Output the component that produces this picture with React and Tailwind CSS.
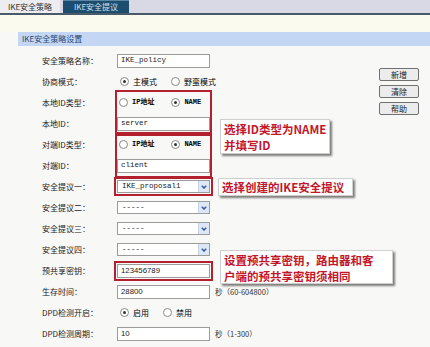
import React from "react";

const cjk = "font-['Noto_Sans_CJK_SC',sans-serif]";
const mono = "font-['Liberation_Mono','Noto_Sans_CJK_SC',monospace]";
const sans = "font-['Liberation_Sans','Noto_Sans_CJK_SC',sans-serif]";

function TextBox({ value, font = mono, className = "" }) {
  return (
    <div
      className={`h-[14px] w-[93px] shrink-0 border border-[#9c9c9c] bg-white flex items-center px-[3px] text-[7.5px] text-[#222] ${font} ${className}`}
    >
      {value}
    </div>
  );
}

function Radio({ checked, label, small }) {
  return (
    <span className="flex items-center gap-[4px] shrink-0 whitespace-nowrap">
      <span className="w-[9px] h-[9px] shrink-0 rounded-full border border-[#8a8a8a] bg-white flex items-center justify-center">
        {checked && <span className="w-[3px] h-[3px] rounded-full bg-[#333]" />}
      </span>
      <span className={small ? `text-[7px] font-bold ${mono}` : "text-[8px]"}>{label}</span>
    </span>
  );
}

function Select({ value }) {
  return (
    <div className="h-[13px] w-[93px] border border-[#9c9c9c] bg-white flex items-center">
      <span className={`flex-1 pl-[4px] text-[7.5px] text-[#222] ${mono}`}>{value}</span>
      <span className="w-[11px] h-full bg-[#dde7f6] border-l border-[#c7d3e8] flex items-center justify-center">
        <svg width="6" height="4" viewBox="0 0 6 4">
          <path d="M0.8 0.8 L3 3 L5.2 0.8" fill="none" stroke="#3658a6" strokeWidth="1.5" />
        </svg>
      </span>
    </div>
  );
}

function Row({ label, children }) {
  return (
    <div className="h-[21px] flex items-center">
      <div className="w-[117px] shrink-0 pl-[42px] text-[8px] text-[#222] whitespace-nowrap">{label}</div>
      <div className="w-[93px] flex items-center">{children}</div>
    </div>
  );
}

// 两行共用一个红框
function BoxedPair({ labels, children }) {
  return (
    <div className="flex">
      <div className="w-[117px] flex flex-col">
        {labels.map((l) => (
          <div key={l} className="h-[21px] flex items-center pl-[42px] text-[8px] text-[#222]">
            {l}
          </div>
        ))}
      </div>
      <div className="w-[93px] flex flex-col outline-2 outline-offset-[0px] outline-[#b3202e]">{children}</div>
    </div>
  );
}

function Callout({ className, children }) {
  return (
    <div
      className={`absolute bg-white border border-[#cfcfcf] shadow-[2px_2px_2px_rgba(0,0,0,0.5)] text-[#c3172b] font-bold leading-[16px] whitespace-nowrap text-[11.5px] ${cjk} ${className}`}
    >
      {children}
    </div>
  );
}

export default function App() {
  return (
    <div className={`w-[430px] h-[347px] overflow-hidden relative bg-[#f8f8f6] ${cjk}`}>
      {/* 选项卡 */}
      <div className="flex h-[15px] items-end bg-[#d9d9e6] border-b-2 border-[#4b5a69]">
        <div className="h-[13px] w-[60px] bg-[#ececf1] flex items-center justify-center text-[8px] text-[#333]">
          IKE安全策略
        </div>
        <div className="h-[13px] w-[66px] ml-[3px] bg-[#1d4d6e] border-t border-[#5b87a6] flex items-center justify-center text-[8px] text-[#d0e0ec]">
          IKE安全提议
        </div>
      </div>
      <div className="h-[17px] bg-[#fbfaef]" />
      <div className="ml-[18px] h-[14px] bg-[#c3d7f5] flex items-center pl-[4px] text-[8px] text-[#2c4670]">
        IKE安全策略设置
      </div>

      <div className="flex mt-[4px]">
        <div className="flex flex-col">
          <Row label="安全策略名称：">
            <TextBox value="IKE_policy" />
          </Row>
          <Row label="协商模式：">
            <div className="flex items-center gap-[14px] pl-[3px]">
              <Radio checked label="主模式" />
              <Radio label="野蛮模式" />
            </div>
          </Row>
          <BoxedPair labels={["本地ID类型：", "本地ID："]}>
            <div className="h-[21px] flex items-center gap-[17px] pl-[2px]">
              <Radio small label="IP地址" />
              <Radio small checked label="NAME" />
            </div>
            <div className="h-[21px] flex items-center">
              <TextBox value="server" />
            </div>
          </BoxedPair>
          <BoxedPair labels={["对端ID类型：", "对端ID："]}>
            <div className="h-[21px] flex items-center gap-[17px] pl-[2px]">
              <Radio small label="IP地址" />
              <Radio small checked label="NAME" />
            </div>
            <div className="h-[21px] flex items-center">
              <TextBox value="client" />
            </div>
          </BoxedPair>
          <Row label="安全提议一：">
            <div className="outline-2 outline-offset-[1px] outline-[#b3202e]">
              <Select value="IKE_proposal1" />
            </div>
          </Row>
          <Row label="安全提议二：">
            <Select value="-----" />
          </Row>
          <Row label="安全提议三：">
            <Select value="-----" />
          </Row>
          <Row label="安全提议四：">
            <Select value="-----" />
          </Row>
          <Row label="预共享密钥：">
            <div className="outline-2 outline-offset-[1px] outline-[#b3202e]">
              <TextBox value="123456789" font={sans} className="text-[7.8px]" />
            </div>
          </Row>
          <div className="h-[21px] flex items-center">
            <div className="w-[117px] shrink-0 pl-[42px] text-[8px] text-[#222]">生存时间：</div>
            <TextBox value="28800" font={sans} className="text-[7.8px]" />
            <span className="ml-[5px] text-[7.5px] text-[#333] whitespace-nowrap">秒（60-604800）</span>
          </div>
          <Row label="DPD检测开启：">
            <div className="flex items-center gap-[14px] pl-[3px]">
              <Radio checked label="启用" />
              <Radio label="禁用" />
            </div>
          </Row>
          <div className="h-[21px] flex items-center">
            <div className="w-[117px] shrink-0 pl-[42px] text-[8px] text-[#222]">DPD检测周期：</div>
            <TextBox value="10" font={sans} className="text-[7.8px]" />
            <span className="ml-[5px] text-[7.5px] text-[#333] whitespace-nowrap">秒（1-300）</span>
          </div>
        </div>

        <div className="ml-auto mr-[11px] pt-[18px] flex flex-col gap-[4px]">
          {["新增", "清除", "帮助"].map((b) => (
            <button
              key={b}
              className="w-[40px] h-[13px] border border-[#707070] rounded-[2px] bg-[#ececec] text-[8px] text-[#222] leading-none flex items-center justify-center"
            >
              {b}
            </button>
          ))}
        </div>
      </div>

      {/* 标注 */}
      <Callout className="left-[220px] top-[119px] w-[110px] h-[35px] px-[3px] pt-[1px]">
        选择ID类型为NAME
        <br />
        并填写ID
      </Callout>
      <Callout className="left-[218px] top-[178px] w-[135px] h-[18px] px-[3px]">
        选择创建的IKE安全提议
      </Callout>
      <Callout className="left-[220px] top-[250px] w-[173px] h-[34px] px-[3px] pt-[1px]">
        设置预共享密钥，路由器和客
        <br />
        户端的预共享密钥须相同
      </Callout>
    </div>
  );
}
